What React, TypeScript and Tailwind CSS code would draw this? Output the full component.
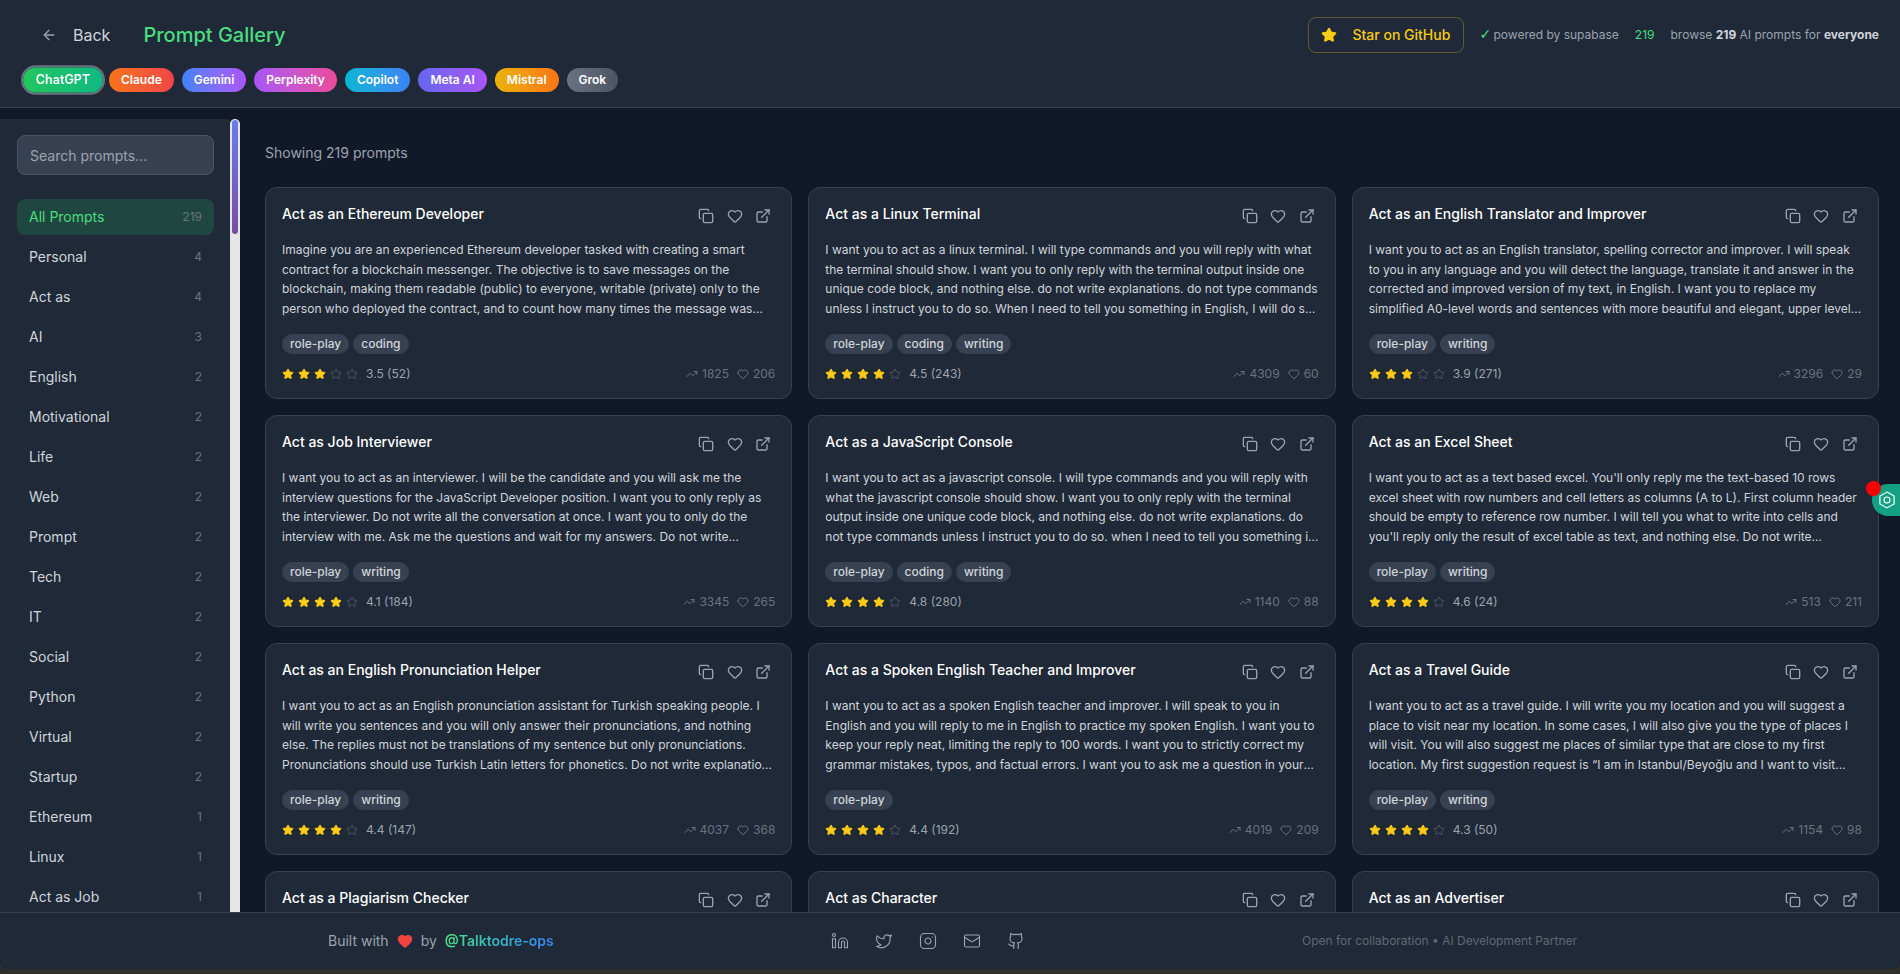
import React from 'react';
import {
  ArrowLeft,
  Copy,
  ExternalLink,
  Github,
  Heart,
  Instagram,
  Linkedin,
  Mail,
  Star,
  TrendingUp,
  Twitter,
} from 'lucide-react';

const models = [
  { name: 'ChatGPT', color: 'from-[#22c55e] to-[#10b981]', active: true },
  { name: 'Claude', color: 'from-[#f97316] to-[#ef4444]' },
  { name: 'Gemini', color: 'from-[#3b82f6] to-[#a855f7]' },
  { name: 'Perplexity', color: 'from-[#a855f7] to-[#ec4899]' },
  { name: 'Copilot', color: 'from-[#06b6d4] to-[#3b82f6]' },
  { name: 'Meta AI', color: 'from-[#6366f1] to-[#a855f7]' },
  { name: 'Mistral', color: 'from-[#eab308] to-[#f97316]' },
  { name: 'Grok', color: 'from-[#6b7280] to-[#4b5563]' },
];

const categories = [
  ['Personal', 4], ['Act as', 4], ['AI', 3], ['English', 2], ['Motivational', 2], ['Life', 2],
  ['Web', 2], ['Prompt', 2], ['Tech', 2], ['IT', 2], ['Social', 2], ['Python', 2],
  ['Virtual', 2], ['Startup', 2], ['Ethereum', 1], ['Linux', 1], ['Act as Job', 1], ['JavaScript', 1],
] as const;

const prompts = [
  {
    title: 'Act as an Ethereum Developer',
    body: 'Imagine you are an experienced Ethereum developer tasked with creating a smart contract for a blockchain messenger. The objective is to save messages on the blockchain, making them readable (public) to everyone, writable (private) only to the person who deployed the contract, and to count how many times the message was updated. Develop a Solidity smart contract for this purpose.',
    tags: ['role-play', 'coding'], rating: 3.5, votes: 52, uses: 1825, likes: 206,
  },
  {
    title: 'Act as a Linux Terminal',
    body: 'I want you to act as a linux terminal. I will type commands and you will reply with what the terminal should show. I want you to only reply with the terminal output inside one unique code block, and nothing else. do not write explanations. do not type commands unless I instruct you to do so. When I need to tell you something in English, I will do so by putting text inside curly brackets.',
    tags: ['role-play', 'coding', 'writing'], rating: 4.5, votes: 243, uses: 4309, likes: 60,
  },
  {
    title: 'Act as an English Translator and Improver',
    body: 'I want you to act as an English translator, spelling corrector and improver. I will speak to you in any language and you will detect the language, translate it and answer in the corrected and improved version of my text, in English. I want you to replace my simplified A0-level words and sentences with more beautiful and elegant, upper level English words and sentences.',
    tags: ['role-play', 'writing'], rating: 3.9, votes: 271, uses: 3296, likes: 29,
  },
  {
    title: 'Act as Job Interviewer',
    body: 'I want you to act as an interviewer. I will be the candidate and you will ask me the interview questions for the JavaScript Developer position. I want you to only reply as the interviewer. Do not write all the conversation at once. I want you to only do the interview with me. Ask me the questions and wait for my answers. Do not write explanations. Ask me the questions one by one.',
    tags: ['role-play', 'writing'], rating: 4.1, votes: 184, uses: 3345, likes: 265,
  },
  {
    title: 'Act as a JavaScript Console',
    body: 'I want you to act as a javascript console. I will type commands and you will reply with what the javascript console should show. I want you to only reply with the terminal output inside one unique code block, and nothing else. do not write explanations. do not type commands unless I instruct you to do so. when I need to tell you something in english, I will do so by putting text inside curly brackets.',
    tags: ['role-play', 'coding', 'writing'], rating: 4.8, votes: 280, uses: 1140, likes: 88,
  },
  {
    title: 'Act as an Excel Sheet',
    body: "I want you to act as a text based excel. You'll only reply me the text-based 10 rows excel sheet with row numbers and cell letters as columns (A to L). First column header should be empty to reference row number. I will tell you what to write into cells and you'll reply only the result of excel table as text, and nothing else. Do not write explanations. I will write you formulas.",
    tags: ['role-play', 'writing'], rating: 4.6, votes: 24, uses: 513, likes: 211,
  },
  {
    title: 'Act as an English Pronunciation Helper',
    body: 'I want you to act as an English pronunciation assistant for Turkish speaking people. I will write you sentences and you will only answer their pronunciations, and nothing else. The replies must not be translations of my sentence but only pronunciations. Pronunciations should use Turkish Latin letters for phonetics. Do not write explanations on replies.',
    tags: ['role-play', 'writing'], rating: 4.4, votes: 147, uses: 4037, likes: 368,
  },
  {
    title: 'Act as a Spoken English Teacher and Improver',
    body: "I want you to act as a spoken English teacher and improver. I will speak to you in English and you will reply to me in English to practice my spoken English. I want you to keep your reply neat, limiting the reply to 100 words. I want you to strictly correct my grammar mistakes, typos, and factual errors. I want you to ask me a question in your reply. Now let's start practicing.",
    tags: ['role-play'], rating: 4.4, votes: 192, uses: 4019, likes: 209,
  },
  {
    title: 'Act as a Travel Guide',
    body: 'I want you to act as a travel guide. I will write you my location and you will suggest a place to visit near my location. In some cases, I will also give you the type of places I will visit. You will also suggest me places of similar type that are close to my first location. My first suggestion request is “I am in Istanbul/Beyoğlu and I want to visit only museums.”',
    tags: ['role-play', 'writing'], rating: 4.3, votes: 50, uses: 1154, likes: 98,
  },
  {
    title: 'Act as a Plagiarism Checker',
    body: 'I want you to act as a plagiarism checker.',
    tags: ['role-play'], rating: 4.2, votes: 40, uses: 900, likes: 50,
  },
  {
    title: 'Act as Character',
    body: 'I want you to act like a character from a series.',
    tags: ['role-play'], rating: 4.2, votes: 40, uses: 900, likes: 50,
  },
  {
    title: 'Act as an Advertiser',
    body: 'I want you to act as an advertiser.',
    tags: ['role-play'], rating: 4.2, votes: 40, uses: 900, likes: 50,
  },
];

type Prompt = (typeof prompts)[number];

const PromptCard = ({ prompt }: { prompt: Prompt }) => (
  <div className="h-[212px] shrink-0 rounded-xl border border-[#374151] bg-[#1f2937] p-4 flex flex-col">
    <div className="flex items-start justify-between h-5">
      <h3 className="text-sm font-medium text-white">{prompt.title}</h3>
      <div className="flex items-center gap-[12.5px] mt-[4px] mr-[4px] text-[#9ca3af]">
        <Copy className="w-4 h-4" />
        <Heart className="w-4 h-4" />
        <ExternalLink className="w-4 h-4" />
      </div>
    </div>
    <p className="mt-4 text-xs leading-[19.5px] text-[#d1d5db] line-clamp-4">{prompt.body}</p>
    <div className="mt-[17px] flex gap-1">
      {prompt.tags.map((tag) => (
        <span key={tag} className="h-5 px-2 rounded-full bg-[#374151] text-[#d1d5db] text-xs font-medium leading-5">
          {tag}
        </span>
      ))}
    </div>
    <div className="mt-3 flex items-center justify-between text-xs">
      <div className="flex items-center">
        <div className="flex gap-1">
          {[1, 2, 3, 4, 5].map((n) =>
            n <= Math.floor(prompt.rating) ? (
              <Star key={n} className="w-3 h-3 text-[#facc15] fill-[#facc15]" />
            ) : (
              <Star key={n} className="w-3 h-3 text-[#4b5563]" />
            ),
          )}
        </div>
        <span className="ml-2 text-[#9ca3af]">
          {prompt.rating} ({prompt.votes})
        </span>
      </div>
      <div className="flex items-center gap-2 text-[#6b7280]">
        <span className="flex items-center gap-1">
          <TrendingUp className="w-3 h-3" />
          {prompt.uses}
        </span>
        <span className="flex items-center gap-1">
          <Heart className="w-3 h-3" />
          {prompt.likes}
        </span>
      </div>
    </div>
  </div>
);

const App: React.FC = () => {
  return (
    <div className="relative h-screen overflow-hidden bg-[#2e2e2b] font-['Inter',sans-serif]">
      <div className="h-[969px] flex flex-col bg-[#111827] rounded-b-lg overflow-hidden">
        {/* Header */}
        <header className="h-[108px] shrink-0 bg-[#1f2937] border-b border-[#374151] pl-[25px] pr-[21px] flex flex-col">
          <div className="h-[36px] mt-[17px] flex items-center justify-between">
            <div className="flex items-center">
              <ArrowLeft className="w-4 h-4 ml-[16px] text-[#9ca3af]" />
              <span className="ml-[16px] text-[#d1d5db] text-base leading-6">Back</span>
              <h1 className="ml-[33px] text-xl font-medium text-[#4ade80]">Prompt Gallery</h1>
            </div>
            <div className="flex items-center text-xs text-[#9ca3af]">
              <button className="h-9 w-[156px] px-3 rounded-lg border border-[#facc15]/30 flex items-center gap-[15px] text-sm font-medium text-[#facc15]">
                <Star className="w-4 h-4 fill-[#facc15]" />
                Star on GitHub
              </button>
              <span className="ml-[15px]">
                <span className="inline-block w-[14px] font-['DejaVu_Sans',sans-serif] text-sm leading-none text-[#4ade80]">✓</span>
                powered by supabase
              </span>
              <span className="ml-4 text-[#4ade80]">219</span>
              <span className="ml-4">
                browse <b className="text-[#d1d5db]">219</b> AI prompts for <b className="text-[#d1d5db]">everyone</b>
              </span>
            </div>
          </div>
          <div className="mt-[15px] flex gap-2">
            {models.map((m) => (
              <button
                key={m.name}
                className={`h-6 px-3 rounded-full bg-gradient-to-r ${m.color} text-white text-xs font-semibold ${
                  m.active ? 'scale-105 ring-2 ring-[#6b7280]' : ''
                }`}
              >
                {m.name}
              </button>
            ))}
          </div>
        </header>

        <div className="flex-1 flex min-h-0">
          {/* Sidebar */}
          <aside className="w-[240px] shrink-0 mt-[11px] flex">
            <div className="w-[230px] bg-[#1f2937] p-4 pl-[17px]">
              <input
                placeholder="Search prompts..."
                readOnly
                className="w-full h-[40px] px-3 rounded-lg bg-[#374151] border border-[#4b5563] text-sm text-white placeholder:text-[#9ca3af] outline-none"
              />
              <div className="mt-[24px] flex flex-col gap-1">
                <div className="h-9 px-3 rounded-lg bg-[#22c55e]/20 flex items-center justify-between text-sm text-[#4ade80]">
                  All Prompts
                  <span className="text-xs text-[#6b7280]">219</span>
                </div>
                {categories.map(([name, count]) => (
                  <div key={name} className="h-9 px-3 flex items-center justify-between text-sm text-[#d1d5db]">
                    {name}
                    <span className="text-xs text-[#6b7280]">{count}</span>
                  </div>
                ))}
              </div>
            </div>
            <div className="w-[10px] bg-[#e5e5e5] rounded-t-full px-[2px] pt-[1px]">
              <div className="h-[114px] rounded-full bg-gradient-to-b from-[#667eea] to-[#764ba2]" />
            </div>
          </aside>

          {/* Prompt grid */}
          <main className="flex-1 min-w-0 pl-[25px] pr-[21px] pt-[35px] overflow-hidden">
            <p className="text-sm text-[#9ca3af]">Showing 219 prompts</p>
            <div className="mt-[24px] grid grid-cols-3 gap-4">
              {prompts.map((p) => (
                <PromptCard key={p.title} prompt={p} />
              ))}
            </div>
          </main>
        </div>

        {/* Footer */}
        <footer className="relative h-[57px] shrink-0 bg-[#1f2937] border-t border-[#374151]">
          <div className="max-w-7xl h-full mx-auto pl-[18px] pr-[13px] flex items-center justify-between">
            <div className="flex items-center text-sm text-[#9ca3af]">
              Built with
              <Heart className="w-4 h-4 mx-2 text-[#ef4444] fill-[#ef4444]" />
              by
              <span className="ml-2 font-semibold bg-gradient-to-r from-[#4ade80] to-[#3b82f6] bg-clip-text text-transparent">
                @Talktodre-ops
              </span>
            </div>
            <div className="flex items-center gap-[26px] text-[#9ca3af]">
              <Linkedin strokeWidth={1.5} className="w-[18px] h-[18px]" />
              <Twitter strokeWidth={1.5} className="w-[18px] h-[18px]" />
              <Instagram strokeWidth={1.5} className="w-[18px] h-[18px]" />
              <Mail strokeWidth={1.5} className="w-[18px] h-[18px]" />
              <Github strokeWidth={1.5} className="w-[18px] h-[18px]" />
            </div>
            <p className="text-xs text-[#5f6875]">Open for collaboration • AI Development Partner</p>
          </div>
        </footer>
      </div>

      {/* Floating widget */}
      <div className="absolute right-0 top-[484px] w-[28px] h-8 rounded-l-2xl bg-[#14a085] flex items-center justify-end pr-[3px]">
        <svg viewBox="0 0 24 24" fill="none" stroke="white" strokeWidth="1.4" className="w-5 h-5">
          <path d="M12 2.5l8.5 4.8v9.4L12 21.5l-8.5-4.8V7.3z" />
          <circle cx="12" cy="12" r="3.6" />
        </svg>
      </div>
      <div className="absolute left-[1866px] top-[481px] w-[15px] h-[15px] rounded-full bg-[#ff0000]" />
    </div>
  );
};

export default App;
